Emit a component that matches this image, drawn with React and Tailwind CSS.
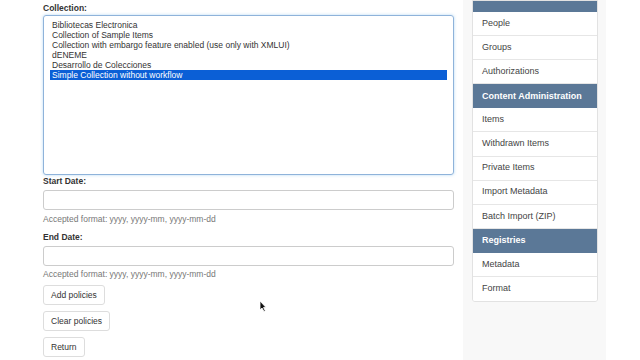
import React from "react";

const collections = [
  "Bibliotecas Electronica",
  "Collection of Sample Items",
  "Collection with embargo feature enabled (use only with XMLUI)",
  "dENEME",
  "Desarrollo de Colecciones",
  "Simple Collection without workflow",
];

function NavItem({ label }) {
  return (
    <div className="h-[24.1px] flex items-center px-[9px] border-b border-[#e6e6e6] bg-white text-[9px] text-[#444]">
      {label}
    </div>
  );
}

function NavHeader({ label, h = "h-[24.1px]" }) {
  return (
    <div className={`${h} flex items-center px-[9px] bg-[#5b7897] text-white text-[9px] font-bold`}>
      {label}
    </div>
  );
}

export default function App() {
  return (
    <div
      className="relative w-[640px] h-[360px] overflow-hidden bg-white flex"
      style={{ fontFamily: '"Liberation Sans", Arial, sans-serif' }}
    >
      <div className="w-[463px] pl-[43px] pr-[9px] pt-[2px]">
        <div className="text-[8.5px] font-bold text-[#333] h-[12px] leading-[12px]">Collection:</div>
        <div className="mt-[1px] h-[160px] border border-[#8fb3da] rounded-[3px] shadow-[0_0_3px_rgba(102,175,233,0.5)] pt-[4px] px-[6px] text-[8.5px] leading-[10px] text-[#333]">
          {collections.map((c, i) => (
            <div
              key={i}
              className={i === 5 ? "bg-[#0b5fd6] text-white pl-[2px] h-[10px]" : "pl-[2px] h-[10px]"}
            >
              {c}
            </div>
          ))}
        </div>
        <div className="text-[8.5px] font-bold text-[#333] h-[12px] leading-[12px]">Start Date:</div>
        <div className="mt-[3px] h-[20px] border border-[#ccc] rounded-[3px]" />
        <div className="mt-[4px] text-[8.5px] text-[#777] h-[11px] leading-[11px]">Accepted format: yyyy, yyyy-mm, yyyy-mm-dd</div>
        <div className="mt-[6px] text-[8.5px] font-bold text-[#333] h-[12px] leading-[12px]">End Date:</div>
        <div className="mt-[3px] h-[20px] border border-[#ccc] rounded-[3px]" />
        <div className="mt-[3px] text-[8.5px] text-[#777] h-[11px] leading-[11px]">Accepted format: yyyy, yyyy-mm, yyyy-mm-dd</div>
        <div className="mt-[5px] flex flex-col items-start gap-[6px] text-[8.5px] text-[#333]">
          <button className="h-[20px] px-[7px] border border-[#ddd] rounded-[3px] bg-white">Add policies</button>
          <button className="h-[20px] px-[7px] border border-[#ddd] rounded-[3px] bg-white">Clear policies</button>
          <button className="h-[20px] px-[7px] border border-[#ddd] rounded-[3px] bg-white">Return</button>
        </div>
      </div>
      <div className="w-[143px] bg-[#f8f8f8] pl-[9px] pr-[8px]">
        <div className="border border-[#e2e2e2] rounded-b-[3px] overflow-hidden">
          <NavHeader label="" h="h-[11px]" />
          <NavItem label="People" />
          <NavItem label="Groups" />
          <NavItem label="Authorizations" />
          <NavHeader label="Content Administration" />
          <NavItem label="Items" />
          <NavItem label="Withdrawn Items" />
          <NavItem label="Private Items" />
          <NavItem label="Import Metadata" />
          <NavItem label="Batch Import (ZIP)" />
          <NavHeader label="Registries" />
          <NavItem label="Metadata" />
          <div className="h-[24.1px] flex items-center px-[9px] bg-white text-[9px] text-[#444]">Format</div>
        </div>
      </div>
      <div className="flex-1 bg-white" />
      <svg className="absolute left-[259px] top-[300px]" width="8" height="12" viewBox="0 0 8 12">
        <path d="M1 1 L1 10 L3 8 L5 11.5 L6.3 10.8 L4.5 7.5 L7 7.5 Z" fill="#111" stroke="#fff" strokeWidth="0.8" />
      </svg>
    </div>
  );
}
